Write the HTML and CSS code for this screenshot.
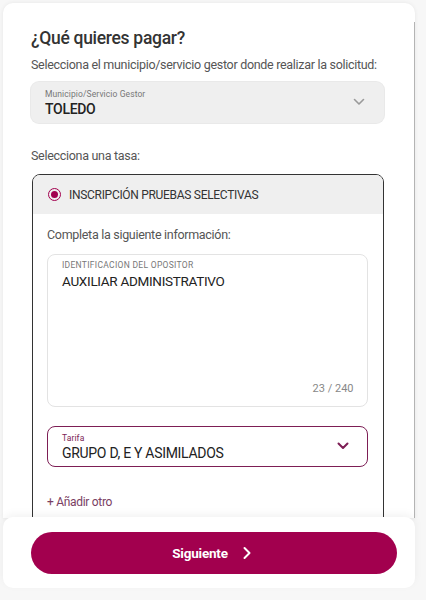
FILE: index.html
```html
<!DOCTYPE html>
<html lang="es">
<head>
<meta charset="utf-8">
<title>¿Qué quieres pagar?</title>
<link rel="stylesheet" href="styles.css">
</head>
<body>
<div class="page">
  <div class="card">
    <div class="content">
      <h1 class="title">¿Qué quieres pagar?</h1>
      <p class="hint">Selecciona el municipio/servicio gestor donde realizar la solicitud:</p>
      <div class="select select-grey">
        <div class="select-text">
          <span class="field-label">Municipio/Servicio Gestor</span>
          <span class="select-value">TOLEDO</span>
        </div>
        <svg class="chev" width="12" height="8" viewBox="0 0 12 8"><path d="M1.5 1.5 L6 6 L10.5 1.5" fill="none" stroke="#9a9a9a" stroke-width="1.6" stroke-linecap="round" stroke-linejoin="round"/></svg>
      </div>
      <p class="hint hint-tasa">Selecciona una tasa:</p>
      <div class="tasa">
        <div class="tasa-head">
          <span class="radio"><span class="radio-dot"></span></span>
          <span class="tasa-name">INSCRIPCIÓN PRUEBAS SELECTIVAS</span>
        </div>
        <div class="tasa-body">
          <p class="hint hint-info">Completa la siguiente información:</p>
          <div class="textarea">
            <span class="field-label upper">IDENTIFICACION DEL OPOSITOR</span>
            <span class="textarea-value">AUXILIAR ADMINISTRATIVO</span>
            <span class="counter">23 / 240</span>
          </div>
          <div class="select select-active">
            <div class="select-text">
              <span class="field-label label-active">Tarifa</span>
              <span class="select-value value-active">GRUPO D, E Y ASIMILADOS</span>
            </div>
            <svg class="chev" width="12" height="8" viewBox="0 0 12 8"><path d="M1.5 1.5 L6 6 L10.5 1.5" fill="none" stroke="#7d1e55" stroke-width="2" stroke-linecap="round" stroke-linejoin="round"/></svg>
          </div>
          <div class="add">+ Añadir otro</div>
        </div>
      </div>
    </div>
    <div class="scrollbar"></div>
  </div>
  <div class="footer">
    <button class="btn">Siguiente
      <svg width="10" height="14" viewBox="0 0 10 14"><path d="M2.5 2 L7.5 7 L2.5 12" fill="none" stroke="#fff" stroke-width="2" stroke-linecap="round" stroke-linejoin="round"/></svg>
    </button>
  </div>
</div>
</body>
</html>
```
FILE: styles.css
```css
* { box-sizing: border-box; }
html, body { margin: 0; padding: 0; }
body {
  background: #f7f7f7;
  font-family: Roboto, "Liberation Sans", sans-serif;
  color: #333;
  letter-spacing: -0.3px;
}
.page {
  width: 426px;
  height: 600px;
  overflow: hidden;
  display: flex;
  flex-direction: column;
}
.card {
  width: 412px;
  height: 515px;
  margin: 3px 0 0 3px;
  background: #fff;
  border-radius: 10px 10px 0 0;
  box-shadow: 0 0 4px rgba(0,0,0,0.07);
  display: flex;
  overflow: hidden;
  flex-shrink: 0;
}
.content {
  flex: 1;
  padding: 23px 30px 0 28px;
}
.scrollbar {
  width: 1.5px;
  margin-top: 19px;
  background: #b4b4b4;
}
.title {
  margin: 0;
  font-size: 17.5px;
  font-weight: 500;
  line-height: 24px;
  color: #333;
}
.hint {
  margin: 0;
  font-size: 12.5px;
  line-height: 16px;
  color: #555;
  white-space: nowrap;
}
.title + .hint { margin-top: 7px; }
.select {
  display: flex;
  align-items: center;
  height: 41px;
  border-radius: 8px;
  padding: 1px 19px 0 14px;
  margin-top: 9px;
}
.select-grey {
  background: #efefef;
  box-shadow: 0 0 0 1px #e9e9e9;
}
.select-text {
  flex: 1;
  display: flex;
  flex-direction: column;
  gap: 2px;
}
.field-label {
  font-size: 8.5px;
  line-height: 10px;
  color: #777;
  letter-spacing: 0.1px;
}
.select-value {
  font-size: 14px;
  line-height: 17px;
  font-weight: 500;
  color: #222;
}
.chev { display: block; margin-top: -3px; }
.hint-tasa { margin-top: 25px; }
.tasa {
  margin-top: 10px;
  margin-left: 1px;
  border: 1.5px solid #333;
  border-radius: 8px;
  height: 400px;
  overflow: hidden;
}
.tasa-head {
  height: 39px;
  background: #efefef;
  display: flex;
  align-items: center;
  padding-left: 15px;
}
.radio {
  width: 13px;
  height: 13px;
  border: 1.5px solid #a2004e;
  border-radius: 50%;
  display: flex;
  align-items: center;
  justify-content: center;
  margin-right: 8px;
}
.radio-dot {
  width: 7px;
  height: 7px;
  background: #a2004e;
  border-radius: 50%;
}
.tasa-name {
  font-size: 12px;
  font-weight: 400;
  color: #333;
}
.tasa-body {
  padding: 13px 15px 0 14px;
}
.hint-info { color: #555; }
.textarea {
  margin-top: 11px;
  height: 153px;
  border: 1px solid #e3e3e3;
  border-radius: 8px;
  padding: 5px 13px 11px 14px;
  display: flex;
  flex-direction: column;
}
.upper { color: #777; letter-spacing: 0.3px; }
.textarea-value {
  margin-top: 3px;
  font-size: 13.5px;
  line-height: 16px;
  color: #222;
}
.counter {
  margin-top: auto;
  align-self: flex-end;
  font-size: 11px;
  color: #888;
  letter-spacing: 0;
}
.select-active {
  margin-top: 19px;
  border: 1.5px solid #7d1e55;
  padding-right: 18px;
}
.label-active { color: #7d1e55; }
.value-active {
  font-size: 14px;
  font-weight: 400;
}
.add {
  margin-top: 28px;
  font-size: 12px;
  color: #7a3e63;
}
.footer {
  width: 412px;
  margin-left: 3px;
  height: 71px;
  margin-top: -1px;
  background: #fff;
  border-radius: 10px;
  box-shadow: 0 -3px 8px rgba(0,0,0,0.05);
  padding: 15px 15px 0 28px;
  position: relative;
}
.btn {
  width: 366px;
  height: 42px;
  border: none;
  border-radius: 21px;
  background: #a2004e;
  color: #fff;
  font-family: inherit;
  font-size: 13.5px;
  font-weight: 700;
  letter-spacing: -0.2px;
  display: flex;
  align-items: center;
  justify-content: center;
  gap: 14px;
  padding: 0 4px 0 0;
}
.btn svg { display: block; }
```
